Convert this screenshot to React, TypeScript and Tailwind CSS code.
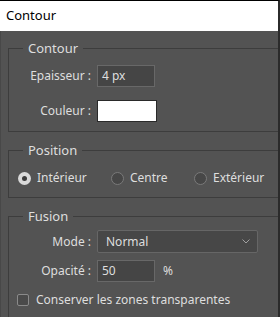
import React from "react"

function Radio({ checked, label }: { checked?: boolean; label: string }) {
  return (
    <label className="flex items-center gap-[6px]">
      {checked ? (
        <span className="w-[13px] h-[13px] rounded-full bg-[#d9d9d9] flex items-center justify-center">
          <span className="w-[5px] h-[5px] rounded-full bg-[#3a3a3a]" />
        </span>
      ) : (
        <span className="w-[13px] h-[13px] rounded-full bg-[#474747] border border-[#7a7a7a]" />
      )}
      <span>{label}</span>
    </label>
  )
}

export default function App() {
  return (
    <div
      className="w-[280px] h-[317px] overflow-hidden flex flex-col bg-[#535353] text-[12px] text-[#dedede]"
      style={{ fontFamily: '"Noto Sans", "Open Sans", sans-serif' }}
    >
      {/* title bar */}
      <div className="h-[31px] shrink-0 bg-white border-t border-black border-r-2 border-r-[#2b2b2b] flex items-center pl-[6px] text-[13px] text-black">
        Contour
      </div>

      <div className="flex-1 flex flex-col border-l border-[#484848] border-r-2 border-r-[#2b2b2b] overflow-hidden">
        {/* Contour */}
        <fieldset className="ml-[7px] mt-[9px] w-[290px] shrink-0 border border-[#3d3d3d] pb-[9px]">
          <legend className="ml-[14px] px-[5px] leading-[17px] text-[13px]">Contour</legend>
          <div className="mt-[8px] flex items-center">
            <span className="w-[82px] text-right">Epaisseur :</span>
            <div className="ml-[6px] w-[58px] h-[22px] bg-[#454545] border border-[#686868] flex items-center pl-[4px]">4 px</div>
          </div>
          <div className="mt-[13px] flex items-center">
            <span className="w-[82px] text-right">Couleur :</span>
            <div className="ml-[6px] w-[60px] h-[22px] bg-white border border-[#2a2a2a]" />
          </div>
        </fieldset>

        {/* Position */}
        <fieldset className="ml-[7px] mt-[10px] w-[290px] shrink-0 border border-[#3d3d3d] pb-[10px]">
          <legend className="ml-[14px] px-[5px] leading-[17px] text-[13px]">Position</legend>
          <div className="mt-[10px] pl-[9px] flex items-center">
            <div className="w-[93px]">
              <Radio checked label="Intérieur" />
            </div>
            <div className="w-[83px]">
              <Radio label="Centre" />
            </div>
            <Radio label="Extérieur" />
          </div>
        </fieldset>

        {/* Fusion */}
        <fieldset className="ml-[7px] mt-[10px] w-[290px] shrink-0 border border-[#3d3d3d] pb-[20px]">
          <legend className="ml-[14px] px-[5px] leading-[17px] text-[13px]">Fusion</legend>
          <div className="mt-[5px] flex items-center">
            <span className="w-[82px] text-right">Mode :</span>
            <div className="ml-[6px] w-[161px] h-[23px] bg-[#474747] border border-[#666666] rounded-[2px] flex items-center justify-between pl-[8px] pr-[7px]">
              <span>Normal</span>
              <svg width="8" height="5" viewBox="0 0 8 5" fill="none">
                <path d="M0.5 0.5 L4 4 L7.5 0.5" stroke="#a0a0a0" strokeWidth="1" />
              </svg>
            </div>
          </div>
          <div className="mt-[7px] flex items-center">
            <span className="w-[82px] text-right">Opacité :</span>
            <div className="ml-[6px] w-[58px] h-[22px] bg-[#454545] border border-[#686868] flex items-center pl-[4px]">50</div>
            <span className="ml-[8px]">%</span>
          </div>
          <label className="mt-[9px] pl-[8px] flex items-center gap-[7px]">
            <span className="w-[12px] h-[12px] rounded-[2px] border border-[#8a8a8a] bg-[#4a4a4a]" />
            <span>Conserver les zones transparentes</span>
          </label>
        </fieldset>
      </div>
    </div>
  )
}
